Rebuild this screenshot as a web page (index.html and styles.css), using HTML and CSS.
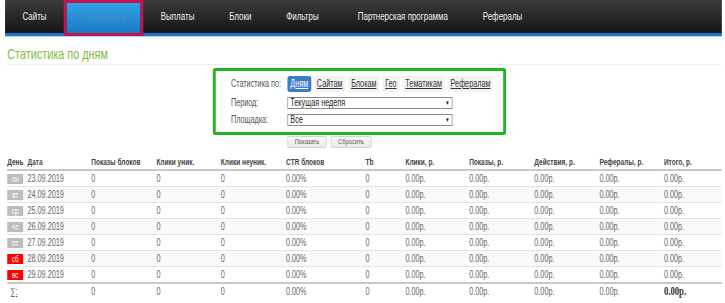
FILE: index.html
```html
<!DOCTYPE html>
<html lang="ru">
<head>
  <meta charset="UTF-8" />
  <title>Статистика по дням</title>
  <link rel="stylesheet" href="styles.css">
</head>
<body>
<div class="frame">
<div class="page">
  <ul class="menu">
    <li><a href="#">Сайты</a></li>
    <li class="active"><a href="#">Статистика</a></li>
    <li><a href="#">Выплаты</a></li>
    <li><a href="#">Блоки</a></li>
    <li><a href="#">Фильтры</a></li>
    <li class="wide"><a href="#">Партнерская программа</a></li>
    <li><a href="#">Рефералы</a></li>
  </ul>

  <div class="content">
    <h1>Статистика по дням</h1>

    <div class="filter-wrap">
      <form class="filter">
        <span class="filter-label">Статистика по:</span>
        <div class="tabs">
          <a href="#" class="tab active">Дням</a>
          <a href="#" class="tab">Сайтам</a>
          <a href="#" class="tab">Блокам</a>
          <a href="#" class="tab">Гео</a>
          <a href="#" class="tab">Тематикам</a>
          <a href="#" class="tab">Рефералам</a>
        </div>

        <label class="filter-label" for="period">Период:</label>
        <span class="select">
          <select id="period">
            <option>Текущая неделя</option>
            <option>Прошлая неделя</option>
            <option>Текущий месяц</option>
          </select>
        </span>

        <label class="filter-label" for="site">Площадка:</label>
        <span class="select">
          <select id="site">
            <option>Все</option>
          </select>
        </span>
      </form>
      <div class="filter-buttons">
        <button type="button">Показать</button>
        <button type="button">Сбросить</button>
      </div>
    </div>

    <table class="stats">
      <colgroup>
        <col style="width:28px"><col style="width:88px"><col style="width:90px"><col style="width:89px">
        <col style="width:90px"><col style="width:110px"><col style="width:55px"><col style="width:88px">
        <col style="width:90px"><col style="width:90px"><col style="width:89px"><col>
      </colgroup>
      <thead>
        <tr>
          <th>День</th><th>Дата</th><th>Показы блоков</th><th>Клики уник.</th><th>Клики неуник.</th>
          <th>CTR блоков</th><th>Tb</th><th>Клики, р.</th><th>Показы, р.</th><th>Действия, р.</th>
          <th>Рефералы, р.</th><th>Итого, р.</th>
        </tr>
      </thead>
      <tbody>
        <tr>
          <td><span class="day">пн</span></td><td>23.09.2019</td><td>0</td><td>0</td><td>0</td><td>0.00%</td>
          <td>0</td><td>0.00р.</td><td>0.00р.</td><td>0.00р.</td><td>0.00р.</td><td>0.00р.</td>
        </tr>
        <tr>
          <td><span class="day">вт</span></td><td>24.09.2019</td><td>0</td><td>0</td><td>0</td><td>0.00%</td>
          <td>0</td><td>0.00р.</td><td>0.00р.</td><td>0.00р.</td><td>0.00р.</td><td>0.00р.</td>
        </tr>
        <tr>
          <td><span class="day">ср</span></td><td>25.09.2019</td><td>0</td><td>0</td><td>0</td><td>0.00%</td>
          <td>0</td><td>0.00р.</td><td>0.00р.</td><td>0.00р.</td><td>0.00р.</td><td>0.00р.</td>
        </tr>
        <tr>
          <td><span class="day">чт</span></td><td>26.09.2019</td><td>0</td><td>0</td><td>0</td><td>0.00%</td>
          <td>0</td><td>0.00р.</td><td>0.00р.</td><td>0.00р.</td><td>0.00р.</td><td>0.00р.</td>
        </tr>
        <tr>
          <td><span class="day">пт</span></td><td>27.09.2019</td><td>0</td><td>0</td><td>0</td><td>0.00%</td>
          <td>0</td><td>0.00р.</td><td>0.00р.</td><td>0.00р.</td><td>0.00р.</td><td>0.00р.</td>
        </tr>
        <tr>
          <td><span class="day weekend">сб</span></td><td>28.09.2019</td><td>0</td><td>0</td><td>0</td><td>0.00%</td>
          <td>0</td><td>0.00р.</td><td>0.00р.</td><td>0.00р.</td><td>0.00р.</td><td>0.00р.</td>
        </tr>
        <tr>
          <td><span class="day weekend">вс</span></td><td>29.09.2019</td><td>0</td><td>0</td><td>0</td><td>0.00%</td>
          <td>0</td><td>0.00р.</td><td>0.00р.</td><td>0.00р.</td><td>0.00р.</td><td>0.00р.</td>
        </tr>
      </tbody>
      <tfoot>
        <tr>
          <td colspan="2" class="sum-label"><abbr title="Итого">∑:</abbr></td>
          <td>0</td><td>0</td><td>0</td><td>0.00%</td><td>0</td>
          <td>0.00р.</td><td>0.00р.</td><td>0.00р.</td><td>0.00р.</td><td><b>0.00р.</b></td>
        </tr>
      </tfoot>
    </table>
  </div>
</div>
</div>
</body>
</html>
```

FILE: styles.css
```css
html, body {
  margin: 0;
  overflow: hidden;
  background: #fff;
}

body {
  font-family: "Liberation Sans", Arial, sans-serif;
  font-size: 10px;
  color: #555;
}

.frame {
  width: 725px;
  overflow: hidden;
}

.page {
  width: 1000px;
  transform: scaleX(0.724);
  transform-origin: 0 0;
}

/* верхнее меню */
.menu {
  display: flex;
  list-style: none;
  margin: 0 3px 0 7px;
  padding: 0;
  height: 33px;
  background: linear-gradient(#3b3b3b, #151515);
  border-bottom: 3px solid #1b74c5;
  box-shadow: 0 1px 0 #a9d6f3;
}
.menu li {
  flex: none;
}
.menu li.wide {
  margin-left: 6px;
}
.menu a {
  display: block;
  padding: 0 24px;
  line-height: 33px;
  font-size: 11px;
  color: #eee;
  text-decoration: none;
}
.menu li.active {
  position: relative;
  height: 36px;
  box-sizing: border-box;
  border: 3px solid #c0164d;
  border-left-width: 4px;
  border-right-width: 4px;
  background: linear-gradient(#2ea2e4, #1a7bc7);
}
.menu li.active a {
  padding: 0 22px;
  line-height: 28px;
  color: #4d8cc2;
}

.content {
  padding: 0 3px 0 10px;
}

h1 {
  margin: 0;
  padding: 9px 0 2px;
  font-size: 15px;
  line-height: 17px;
  font-weight: normal;
  color: #80bd3c;
  border-bottom: 1px solid #eee;
}

/* фильтр */
.filter-wrap {
  width: max-content;
  margin: 3px 0 0 284px;
}
.filter {
  display: grid;
  grid-template-columns: 78px auto;
  row-gap: 5px;
  align-items: center;
  margin: 0;
  padding: 5px 14px 6px 21px;
  border: 3px solid #22b422;
  border-left-width: 4px;
  border-right-width: 4px;
  border-radius: 3px;
}
.filter-label {
  color: #555;
  line-height: 12px;
}
.tabs {
  display: flex;
  gap: 4px;
}
.tab {
  display: block;
  height: 16px;
  line-height: 16px;
  padding: 0 4px;
  border-radius: 3px;
  background: #f2f2f2;
  color: #333;
}
.tab.active {
  background: #3b7dcc;
  color: #fff;
}

.select {
  position: relative;
  display: block;
  width: 228px;
}
.select select {
  display: block;
  width: 100%;
  height: 12px;
  margin: 0;
  padding: 0 3px;
  border: 1px solid #8a8a8a;
  border-radius: 0;
  background: #fff;
  font-family: inherit;
  font-size: 10px;
  line-height: 10px;
  color: #222;
  -webkit-appearance: none;
  appearance: none;
}
.select::after {
  content: "▼";
  position: absolute;
  right: 4px;
  top: 2px;
  font-size: 6px;
  line-height: 8px;
  color: #111;
  pointer-events: none;
}

.filter-buttons {
  display: flex;
  gap: 6px;
  padding-left: 103px;
  margin-top: 1px;
}
.filter-buttons button {
  height: 12px;
  padding: 0 9px;
  border: 1px solid #ccc;
  border-radius: 2px;
  background: linear-gradient(#fbfbfb, #e9e9e9);
  font-family: inherit;
  font-size: 8px;
  line-height: 10px;
  color: #555;
  cursor: pointer;
}

/* таблица */
.stats {
  width: 987px;
  margin-top: 4px;
  table-layout: fixed;
  border-collapse: separate;
  border-spacing: 0;
}
.stats th {
  padding: 4px 0 1px;
  line-height: 12px;
  text-align: left;
  font-size: 9px;
  font-weight: bold;
  color: #444;
  border-bottom: 2px solid #c8c8c8;
  white-space: nowrap;
}
.stats td {
  padding: 0;
  height: 15px;
  line-height: 15px;
  color: #666;
  white-space: nowrap;
  border-bottom: 1px solid #e6e6e6;
}
.stats tbody tr:nth-child(even) td {
  background: #f9f9f9;
}
.stats tbody tr:last-child td {
  border-bottom: none;
}
.stats tfoot td {
  border-top: 2px solid #c8c8c8;
  border-bottom: none;
}
.stats tfoot b {
  font-family: "Liberation Serif", "Times New Roman", serif;
  font-size: 12px;
  color: #333;
}
.sum-label {
  padding-left: 4px !important;
}
.sum-label abbr {
  text-decoration: underline;
  color: #555;
}

.day {
  display: inline-block;
  width: 22px;
  height: 10px;
  line-height: 10px;
  vertical-align: middle;
  text-align: center;
  font-size: 9px;
  color: #fff;
  background: #bdbdbd;
}
.day.weekend {
  background: #f00;
}
```
